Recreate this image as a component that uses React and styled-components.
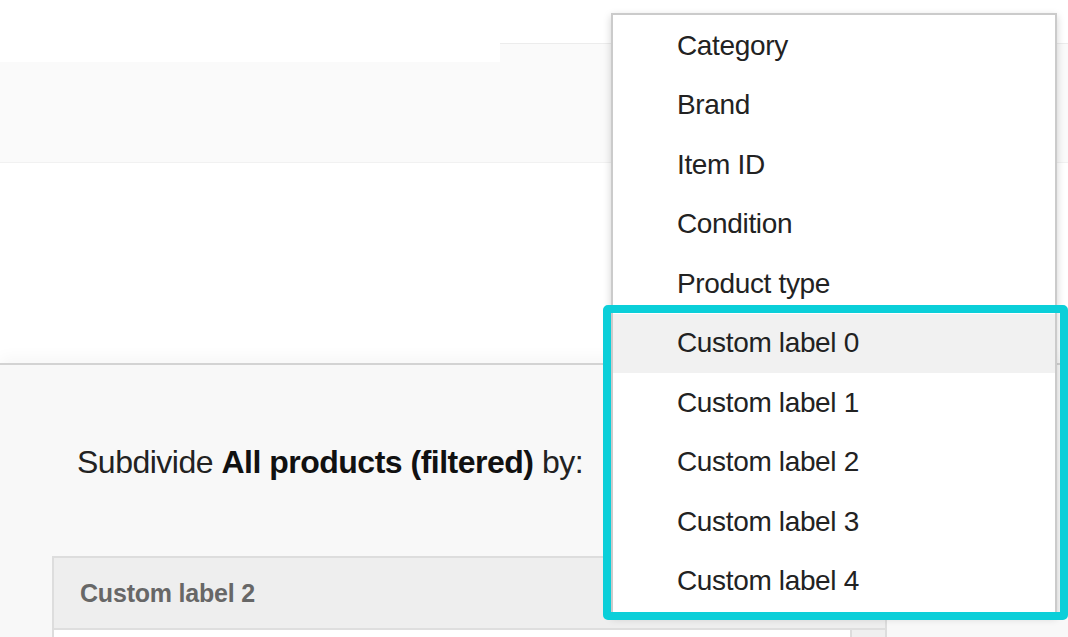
import React from 'react';
import styled, { createGlobalStyle } from 'styled-components';

const GlobalStyle = createGlobalStyle`
  html, body {
    margin: 0;
    padding: 0;
    background: #ffffff;
  }
  body {
    font-family: "Liberation Sans", Arial, sans-serif;
    color: #222222;
  }
`;

const Page = styled.div`
  position: relative;
  width: 1068px;
  height: 637px;
  overflow: hidden;
  display: flex;
  flex-direction: column;
  background: #ffffff;
`;

const TopArea = styled.div`
  height: 363px;
  flex-shrink: 0;
  display: flex;
  flex-direction: column;
`;

const Band = styled.div`
  margin-top: 43px;
  height: 119px;
  display: flex;
  align-items: flex-end;
  border-bottom: 1px solid #f1f1f1;
`;

const BandTab = styled.div`
  width: ${p => p.$width ? `${p.$width}px` : 'auto'};
  flex: ${p => p.$width ? '0 0 auto' : '1'};
  height: ${p => p.$height}px;
  background: #fafafa;
  border-top: ${p => p.$line ? '1px solid #ececec' : 'none'};
  box-sizing: border-box;
`;

const LowerPanel = styled.div`
  flex: 1;
  min-height: 0;
  overflow: hidden;
  background: #f8f8f8;
  border-top: 2px solid #d3d3d3;
  box-shadow: 0 -6px 14px rgba(0, 0, 0, 0.035);
  padding: 79px 0 0 52px;
  display: flex;
  flex-direction: column;
`;

const Prompt = styled.div`
  margin-left: 25px;
  font-size: 32px;
  letter-spacing: -0.5px;
  line-height: 36px;
  color: #222;
  b {
    font-weight: bold;
    color: #111;
  }
`;

const Table = styled.div`
  margin-top: 76px;
  width: 831px;
  flex-shrink: 0;
  border: 2px solid #dddddd;
  border-bottom: none;
  display: flex;
  flex-direction: column;
`;

const HeaderRow = styled.div`
  height: 70px;
  background: #eeeeee;
  display: flex;
  align-items: center;
  padding-left: 26px;
  font-size: 25px;
  font-weight: bold;
  letter-spacing: -0.2px;
  color: #676767;
  border-bottom: 2px solid #dedede;
`;

const BodyRow = styled.div`
  height: 40px;
  display: flex;
`;

const BodyCell = styled.div`
  flex: 1;
  background: #ffffff;
`;

const ScrollCell = styled.div`
  width: 33px;
  background: #efefef;
  border-left: 2px solid #dcdcdc;
`;

const Menu = styled.div`
  position: absolute;
  left: 611px;
  top: 13px;
  width: 446px;
  box-sizing: border-box;
  background: #ffffff;
  border: 2px solid #cbcbcb;
  box-shadow: 0 3px 8px rgba(0, 0, 0, 0.18);
  padding: 1px 0 2px;
  z-index: 2;
`;

const MenuItem = styled.div`
  height: 59.5px;
  display: flex;
  align-items: center;
  padding-left: 64px;
  font-size: 28px;
  letter-spacing: -0.35px;
  color: #222;
  background: ${p => p.$hover ? '#f1f1f1' : 'transparent'};
`;

const Highlight = styled.div`
  position: relative;
  &::after {
    content: "";
    position: absolute;
    top: -9px;
    bottom: -9px;
    left: -10px;
    right: -13px;
    border: 8px solid #0bcfd9;
    border-radius: 5px;
    pointer-events: none;
  }
`;

const plain = ['Category', 'Brand', 'Item ID', 'Condition', 'Product type'];
const custom = [0, 1, 2, 3, 4].map(n => `Custom label ${n}`);

export default function App() {
  return (
    <>
      <GlobalStyle />
      <Page>
        <TopArea>
          <Band>
            <BandTab $width={500} $height={100} />
            <BandTab $height={119} $line />
          </Band>
        </TopArea>
        <LowerPanel>
          <Prompt>
            Subdivide <b>All products (filtered)</b> by:
          </Prompt>
          <Table>
            <HeaderRow>Custom label 2</HeaderRow>
            <BodyRow>
              <BodyCell />
              <ScrollCell />
            </BodyRow>
          </Table>
        </LowerPanel>
        <Menu>
          {plain.map(label => (
            <MenuItem key={label}>{label}</MenuItem>
          ))}
          <Highlight>
            {custom.map((label, i) => (
              <MenuItem key={label} $hover={i === 0}>{label}</MenuItem>
            ))}
          </Highlight>
        </Menu>
      </Page>
    </>
  );
}
